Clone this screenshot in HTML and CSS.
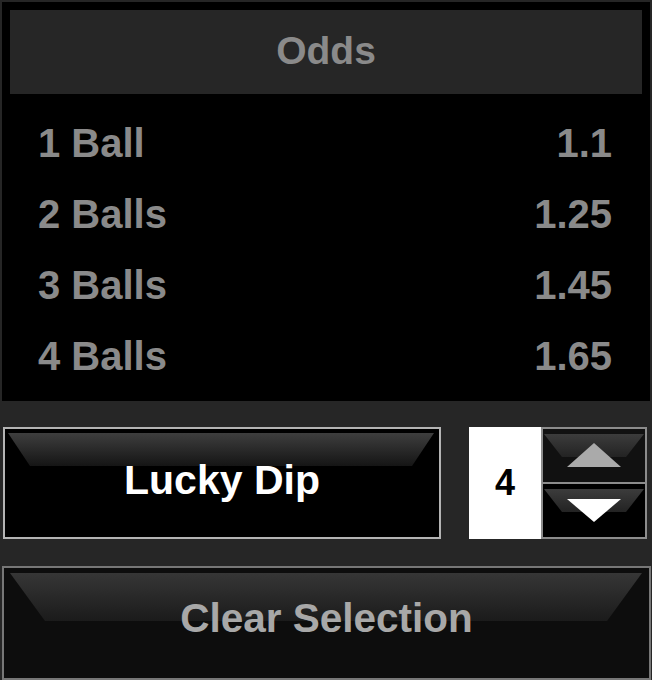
FILE: index.html
```html
<!DOCTYPE html>
<html>
<head>
<meta charset="utf-8">
<link rel="stylesheet" href="styles.css">
</head>
<body>
<div class="odds-panel">
  <div class="odds-header">Odds</div>
  <div class="odds-list">
    <div class="odds-row"><span>1 Ball</span><span>1.1</span></div>
    <div class="odds-row"><span>2 Balls</span><span>1.25</span></div>
    <div class="odds-row"><span>3 Balls</span><span>1.45</span></div>
    <div class="odds-row"><span>4 Balls</span><span>1.65</span></div>
  </div>
</div>
<div class="controls">
  <button class="btn lucky"><span class="label">Lucky Dip</span></button>
  <div class="count">4</div>
  <div class="spinner">
    <button class="spin up"><svg class="arrow" width="54" height="24" viewBox="0 0 54 24"><polygon points="0,24 54,24 27,0" fill="#aaaaaa"/></svg></button>
    <button class="spin down"><svg class="arrow" width="54" height="24" viewBox="0 0 54 24"><polygon points="0,0 54,0 27,23" fill="#ffffff"/></svg></button>
  </div>
</div>
<button class="btn clear"><span class="label">Clear Selection</span></button>
</body>
</html>
```
FILE: styles.css
```css
html, body {
  margin: 0;
  padding: 0;
  overflow: hidden;
}
body {
  background: #262626;
  width: 652px;
  height: 680px;
  font-family: "Liberation Sans", Arial, sans-serif;
  font-weight: bold;
}
.odds-panel {
  margin: 2px 2px 0 2px;
  background: #000;
  padding: 8px 8px 9px 8px;
  height: 382px;
}
.odds-header {
  background: #262626;
  height: 82px;
  padding-bottom: 2px;
  display: flex;
  align-items: center;
  justify-content: center;
  color: #8a8a8a;
  font-size: 39px;
}
.odds-list {
  padding-top: 14px;
}
.odds-row {
  height: 71px;
  display: flex;
  align-items: center;
  justify-content: space-between;
  padding: 0 30px 0 28px;
  color: #8a8a8a;
  font-size: 40px;
}
.controls {
  display: flex;
  margin-top: 26px;
  height: 112px;
  padding-left: 3px;
}
.btn {
  position: relative;
  font-family: "Liberation Sans", Arial, sans-serif;
  font-weight: bold;
  padding: 0;
  display: flex;
  align-items: center;
  justify-content: center;
  cursor: pointer;
}
.btn .label {
  position: relative;
  z-index: 1;
}
.lucky {
  width: 438px;
  height: 112px;
  background: #000;
  border: 2px solid #b4b4b4;
  color: #fff;
  font-size: 41px;
  padding-bottom: 6px;
}
.lucky::before {
  content: "";
  position: absolute;
  left: 3px;
  right: 5px;
  top: 4px;
  height: 33px;
  background: linear-gradient(#3e3e3e, #151515);
  clip-path: polygon(0 0, 100% 0, calc(100% - 22px) 100%, 22px 100%);
}
.count {
  margin-left: 28px;
  width: 72px;
  height: 112px;
  background: #fff;
  color: #000;
  font-size: 36px;
  display: flex;
  align-items: center;
  justify-content: center;
}
.spinner {
  width: 106px;
  display: flex;
  flex-direction: column;
}
.spin {
  position: relative;
  height: 56px;
  padding: 0;
  border: 2px solid #8c8c8c;
  display: flex;
  justify-content: center;
  cursor: pointer;
}
.spin::before {
  content: "";
  position: absolute;
  left: 1px;
  right: 1px;
  top: 5px;
  height: 23px;
  background: linear-gradient(#3c3c3c, #232323);
  clip-path: polygon(0 0, 100% 0, calc(100% - 18px) 100%, 18px 100%);
}
.arrow {
  position: relative;
  z-index: 1;
  display: block;
}
.up {
  background: #111;
  border-bottom-width: 1px;
}
.up .arrow {
  margin-top: 14px;
}
.down {
  background: #000;
  border-top-width: 1px;
}
.down .arrow {
  margin-top: 15px;
}
.clear {
  margin: 27px 1px 0 2px;
  width: 649px;
  height: 114px;
  background: #0d0d0d;
  border: 2px solid #777;
  color: #a8a8a8;
  font-size: 40.5px;
  padding-bottom: 10px;
}
.clear::before {
  content: "";
  position: absolute;
  left: 6px;
  right: 7px;
  top: 5px;
  height: 48px;
  background: linear-gradient(#363636, #1b1b1b);
  clip-path: polygon(0 0, 100% 0, calc(100% - 35px) 100%, 35px 100%);
}
```
